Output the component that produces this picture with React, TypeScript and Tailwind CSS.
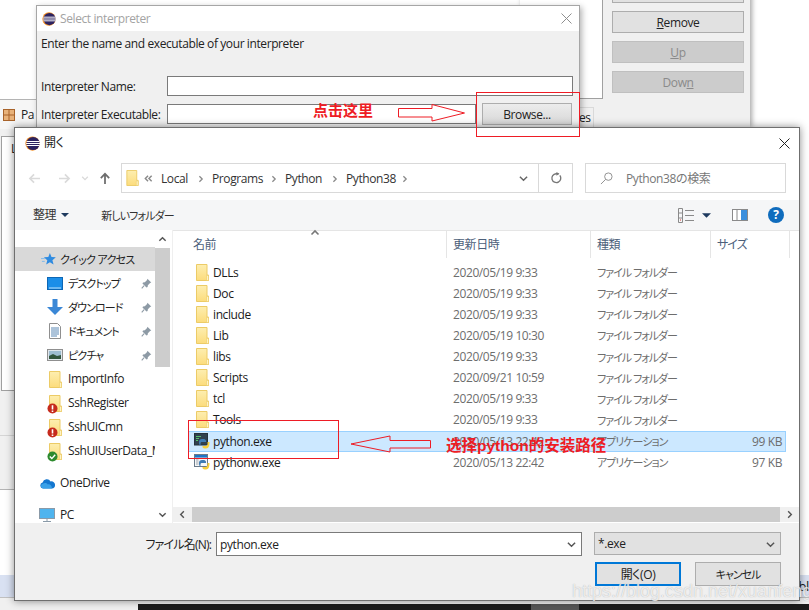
import React from "react";

const Eclipse = ({ className = "" }: { className?: string }) => (
  <svg viewBox="0 0 16 16" className={className}>
    <circle cx="8" cy="8" r="7.6" fill="#f28c1e" />
    <circle cx="8.6" cy="8" r="7" fill="#2c2360" />
    <path d="M1.6 5.9h14M1.2 8h14.8M1.6 10.1h14" stroke="#fff" strokeWidth="1.1" />
  </svg>
);

const Folder = ({ className = "" }: { className?: string }) => (
  <svg viewBox="0 0 13 17" className={className}>
    <defs>
      <linearGradient id="fg" x1="0" y1="0" x2="0" y2="1">
        <stop offset="0" stopColor="#fdeeb0" />
        <stop offset="1" stopColor="#fcdc7c" />
      </linearGradient>
    </defs>
    <path d="M.5.5h10.5v10.5h1.5v5.5H.5z" fill="url(#fg)" stroke="#eccb66" />
    <path d="M10.5 11.5h2v5h-2z" fill="#fff3c4" stroke="#eccb66" strokeWidth=".6" />
  </svg>
);

const PyBlobs = () => (
  <>
    <path d="M5 9c0-2 1-3 3-3h2c1 0 2 1 2 2v1H8c-1 0-1.5.5-1.5 1.5V12H6c-.7 0-1-1-1-3z" fill="#3e7cb4" />
    <path d="M15.5 9c0 3-.5 6.5-3.5 6.5-1.5 0-3.5-.5-3.5-1.5v-1h3c1 0 2-1 2-2V9z" fill="#f6cf3c" />
  </>
);

const PyExe = () => (
  <svg viewBox="0 0 16 16" className="w-[16px] h-[16px] shrink-0">
    <rect x=".5" y=".5" width="13" height="11.5" fill="#30414f" stroke="#24323d" />
    <path d="M2 3.5h5M2 5.5h3M2 7.5h2" stroke="#57c16a" strokeWidth="1" />
    <PyBlobs />
  </svg>
);

const PywExe = () => (
  <svg viewBox="0 0 16 16" className="w-[16px] h-[16px] shrink-0">
    <rect x=".5" y=".5" width="13" height="12" fill="#f7f7f7" stroke="#6a7a8a" />
    <rect x="1" y="1" width="12" height="2.6" fill="#1f74c6" />
    <path d="M2 6h2.5M2 8h2.5M2 10h2.5" stroke="#9aa3ac" />
    <PyBlobs />
  </svg>
);

const Pin = () => (
  <svg viewBox="0 0 12 12" className="w-[11px] h-[11px] shrink-0">
    <path d="M7 .8l4.2 4.2-1.3.5-2.4 2.4-.3 2-1.2.5L1.6 6l.6-1.2 2-.3 2.4-2.4z" fill="#8d9aa5" />
    <path d="M3.4 8.4L.8 11.2" stroke="#8d9aa5" strokeWidth="1.2" />
  </svg>
);

const Badge = ({ ok }: { ok?: boolean }) => (
  <svg viewBox="0 0 11 11" className="absolute left-[-2px] bottom-[-2px] w-[11px] h-[11px]">
    <circle cx="5.5" cy="5.5" r="5" fill={ok ? "#2d8a2d" : "#c62a1d"} />
    {ok ? (
      <path d="M2.8 5.6l2 2 3.4-3.8" stroke="#fff" strokeWidth="1.4" fill="none" />
    ) : (
      <path d="M5.5 2.2v4.2M5.5 7.4v1.5" stroke="#fff" strokeWidth="1.6" />
    )}
  </svg>
);

const Star = () => (
  <svg viewBox="0 0 16 16" className="w-[15px] h-[15px]">
    <path d="M9.5 1l1.7 4.4 4.6.3-3.6 3 1.2 4.7-3.9-2.6-4 2.6 1.2-4.7-3.6-3 4.7-.3z" fill="#2f8be0" />
    <path d="M0 7h4M1 10h3" stroke="#7db8ec" />
  </svg>
);

const Desktop = () => (
  <svg viewBox="0 0 16 13" className="w-[16px] h-[13px]">
    <rect x=".5" y=".5" width="15" height="12" fill="#1b8ee8" stroke="#0d67b5" />
    <path d="M2 11h12" stroke="#bfe2fb" />
  </svg>
);

const Down = () => (
  <svg viewBox="0 0 16 16" className="w-[16px] h-[16px]">
    <path d="M5.5 0h5v8H16l-8 8-8-8h5.5z" fill="#3a87d6" />
  </svg>
);

const Doc = () => (
  <svg viewBox="0 0 12 16" className="w-[12px] h-[16px]">
    <path d="M.5.5h8l3 3v12H.5z" fill="#fff" stroke="#8f8f8f" />
    <path d="M2 5h8M2 7h8M2 9h8M2 11h8M2 13h6" stroke="#5b88b5" />
  </svg>
);

const Pict = () => (
  <svg viewBox="0 0 16 12" className="w-[16px] h-[12px]">
    <rect x=".5" y=".5" width="15" height="11" fill="#dfe6ec" stroke="#8f8f8f" />
    <rect x="2" y="2" width="12" height="8" fill="#9dbcd0" />
    <path d="M2 7l4-2 4 2 4-1v4H2z" fill="#31543c" />
  </svg>
);

const Cloud = () => (
  <svg viewBox="0 0 16 11" className="w-[16px] h-[11px]">
    <path d="M4 10.5A3 3 0 013.6 4.6 4.4 4.4 0 0111.6 3.4 3.6 3.6 0 0116 7.2a3.2 3.2 0 01-3 3.3z" fill="#1476cf" />
    <path d="M4 10.5a2.4 2.4 0 01-.3-4.7c2-1.3 4-.6 5 .6 2-.6 4 .4 4.3 4.1z" fill="#39a0e8" />
  </svg>
);

const Monitor = () => (
  <svg viewBox="0 0 16 15" className="w-[16px] h-[15px]">
    <rect x=".5" y=".5" width="15" height="10" fill="#4fb4ee" stroke="#8a9aa8" />
    <path d="M8 11v2M4 13.5h8" stroke="#8a9aa8" />
  </svg>
);

const Chev = ({ d, className = "" }: { d: string; className?: string }) => (
  <svg viewBox="0 0 10 10" className={className}>
    <path d={d} fill="none" stroke="currentColor" strokeWidth="1.6" />
  </svg>
);

const Crumb = ({ label, w }: { label: string; w: string }) => (
  <div className={`flex items-center shrink-0 pt-[1px] ${w}`}>
    <span>{label}</span>
    <Chev d="M3 1.5L6.5 5 3 8.5" className="ml-auto mr-[7px] w-[8px] h-[8px] text-[#8a8a8a] shrink-0" />
  </div>
);

const sideQuick = [
  { label: "デスクトップ", icon: <Desktop /> },
  { label: "ダウンロード", icon: <Down /> },
  { label: "ドキュメント", icon: <Doc /> },
  { label: "ピクチャ", icon: <Pict /> },
];

const FolderBadge = ({ kind }: { kind?: "err" | "ok" }) => (
  <div className="relative w-[13px] h-[17px]">
    <Folder className="w-[13px] h-[17px]" />
    {kind && <Badge ok={kind === "ok"} />}
  </div>
);

const sideFolders: { label: string; kind?: "err" | "ok" }[] = [
  { label: "ImportInfo" },
  { label: "SshRegister", kind: "err" },
  { label: "SshUICmn", kind: "err" },
  { label: "SshUIUserData_M", kind: "ok" },
];

const folders = [
  ["DLLs", "2020/05/19 9:33"],
  ["Doc", "2020/05/19 9:33"],
  ["include", "2020/05/19 9:33"],
  ["Lib", "2020/05/19 10:30"],
  ["libs", "2020/05/19 9:33"],
  ["Scripts", "2020/09/21 10:59"],
  ["tcl", "2020/05/19 9:33"],
  ["Tools", "2020/05/19 9:33"],
];

const FileRow = ({
  icon,
  name,
  date,
  type,
  size,
  selected,
}: {
  icon: React.ReactNode;
  name: string;
  date: string;
  type: string;
  size?: string;
  selected?: boolean;
}) => (
  <div
    className={`flex items-center h-[21.125px] w-[598px] pl-[5px] border ${
      selected ? "bg-[#cce8ff] border-[#99d1ff]" : "border-transparent"
    }`}
  >
    <div className="w-[16px] flex justify-center shrink-0">{icon}</div>
    <div className="w-[243px] pl-[3px] pt-[1px] shrink-0 text-[#1a1a1a]">{name}</div>
    <div className="w-[144px] pt-[1px] shrink-0 text-[#6d6d6d]">{date}</div>
    <div className="flex-1 pt-[1px] text-[11px] tracking-[-1px] text-[#6d6d6d]">{type}</div>
    <div className="pr-[3px] pt-[1px] text-[#6d6d6d]">{size}</div>
  </div>
);

export default function App() {
  return (
    <div className="relative w-[809px] h-[610px] overflow-hidden bg-white text-[12px] leading-none text-[#222] font-['Open_Sans','Noto_Sans_CJK_JP',sans-serif] tracking-[-0.4px] [font-feature-settings:'palt']">
      {/* Window behind: left part */}
      <div className="absolute left-0 top-[99px] w-[750px] h-[391px] bg-[#f0f0f0] border-t border-b border-[#b4b4b4]">
        <div className="h-[29px] flex items-center pl-[3px] gap-[6px] bg-[#f6f6f6]">
          <svg viewBox="0 0 12 12" className="w-[12px] h-[12px]">
            <rect x=".5" y=".5" width="11" height="11" fill="#e8b27a" stroke="#a8632a" />
            <path d="M6 0v12M0 6h12" stroke="#a8632a" />
          </svg>
          <span>Pa</span>
        </div>
        <div className="ml-[1px] mt-[7px] w-[700px] h-[255px] bg-white border border-[#a0a0a0] pl-[9px] pt-[6px]">L</div>
        <div className="mt-[44px] h-[1px] bg-[#d5d5d5]" />
      </div>
      <div className="absolute left-0 top-[575px] w-[809px] h-[23px] bg-[#d9e1f2] flex justify-end items-center text-[13px]">
        bl
      </div>
      <div className="absolute left-0 top-[597px] w-[809px] h-[13px] bg-[#f0f0f0] border-t border-[#c0c0c0]" />
      <div className="absolute left-[138px] top-[604px] w-[671px] h-[6px] bg-[#1b1b1b] flex">
        <div className="ml-[393px] w-[48px] h-full bg-[#555]" />
      </div>

      {/* Window behind: right part */}
      <div className="absolute left-[520px] top-[-10px] w-[230px] h-[137px] bg-[#f0f0f0] shadow-[2px_0_5px_rgba(0,0,0,0.35)] flex">
        <div className="w-[83px] h-[109px] bg-white border-r border-b border-[#a0a0a0]" />
        <div className="ml-[9px] w-[132px] flex flex-col gap-[8px] text-center">
          <div className="h-[13px] bg-[#e1e1e1] border border-[#adadad]" />
          <div className="h-[22px] bg-[#e1e1e1] border border-[#adadad] flex items-center justify-center pt-[1px]">
            <span><span className="underline">R</span>emove</span>
          </div>
          <div className="h-[22px] bg-[#cccccc] border border-[#bfbfbf] text-[#8a8a8a] flex items-center justify-center pt-[1px]">
            <span><span className="underline">U</span>p</span>
          </div>
          <div className="h-[22px] bg-[#cccccc] border border-[#bfbfbf] text-[#8a8a8a] flex items-center justify-center pt-[1px]">
            <span>Dow<span className="underline">n</span></span>
          </div>
        </div>
      </div>
      <div className="absolute left-[579px] top-[107px] w-[15px] h-[20px] bg-[#f0f0f0] border-t border-r border-[#d9d9d9] flex items-center">
        es
      </div>

      {/* Select interpreter */}
      <div className="absolute left-[36px] top-[5px] w-[544px] h-[126px] bg-[#f0f0f0] border border-[#a6a6a6] shadow-[2px_2px_6px_rgba(0,0,0,0.3)]">
        <div className="h-[25px] bg-white flex items-center pl-[5px] pr-[7px]">
          <Eclipse className="w-[14px] h-[14px]" />
          <span className="ml-[4px] text-[#a3a3a3]">Select interpreter</span>
          <svg viewBox="0 0 11 11" className="ml-auto w-[11px] h-[11px]">
            <path d="M.5.5l10 10M10.5.5l-10 10" stroke="#8e8e8e" />
          </svg>
        </div>
        <div className="pl-[4px] pt-[7px] h-[45px]">Enter the name and executable of your interpreter</div>
        <div className="flex items-center h-[20px]">
          <div className="w-[130px] pl-[4px] pt-[2px]">Interpreter Name:</div>
          <div className="w-[406px] h-[20px] bg-white border border-[#7a7a7a]" />
        </div>
        <div className="flex items-center h-[20px] mt-[8px]">
          <div className="w-[130px] pl-[4px] pt-[2px]">Interpreter Executable:</div>
          <div className="w-[309px] h-[20px] bg-white border border-[#7a7a7a]" />
          <div className="ml-[6px] w-[90px] h-[22px] bg-gradient-to-b from-[#ececec] to-[#d8d8d8] border border-[#adadad] flex items-center justify-center pt-[1px]">
            Browse...
          </div>
        </div>
      </div>

      {/* Open dialog */}
      <div className="absolute left-[14px] top-[127px] w-[786px] h-[474px] bg-white border border-[#6f6f6f] shadow-[0_0_8px_rgba(0,0,0,0.45)] flex flex-col">
        <div className="h-[30px] flex items-center pl-[10px] pr-[9px] shrink-0">
          <Eclipse className="w-[15px] h-[15px]" />
          <span className="ml-[4px] text-[#222]">開く</span>
          <svg viewBox="0 0 11 11" className="ml-auto w-[11px] h-[11px]">
            <path d="M.5.5l10 10M10.5.5l-10 10" stroke="#222" />
          </svg>
        </div>
        <div className="h-[42px] flex items-start pt-[5px] shrink-0">
          <div className="flex items-center h-[30px] pl-[13px] w-[106px] shrink-0">
            <svg viewBox="0 0 14 12" className="w-[13px] h-[11px] text-[#dadada]">
              <path d="M13 6H2M6.5 1.5L2 6l4.5 4.5" fill="none" stroke="currentColor" strokeWidth="1.8" />
            </svg>
            <svg viewBox="0 0 14 12" className="ml-[17px] w-[13px] h-[11px] text-[#dadada]">
              <path d="M1 6h11M7.5 1.5L12 6l-4.5 4.5" fill="none" stroke="currentColor" strokeWidth="1.8" />
            </svg>
            <Chev d="M1.5 3.5L5 7l3.5-3.5" className="ml-[10px] w-[8px] h-[8px] text-[#dadada]" />
            <svg viewBox="0 0 12 14" className="ml-[10px] w-[12px] h-[13px] text-[#6d6d6d]">
              <path d="M6 13V2M1.5 6.5L6 2l4.5 4.5" fill="none" stroke="currentColor" strokeWidth="1.9" />
            </svg>
          </div>
          <div className="w-[452px] h-[30px] border border-[#d9d9d9] flex items-center pl-[4px] text-[#333]">
            <Folder className="w-[13px] h-[16px] shrink-0" />
            <Chev d="M4.5 2L1.5 5l3 3M8.5 2l-3 3 3 3" className="ml-[5px] w-[9px] h-[9px] text-[#8a8a8a] shrink-0" />
            <div className="w-[8px] shrink-0" />
            <Crumb label="Local" w="w-[51px]" />
            <Crumb label="Programs" w="w-[73px]" />
            <Crumb label="Python" w="w-[61px]" />
            <Crumb label="Python38" w="w-[70px]" />
            <Chev d="M1 3l4 4 4-4" className="ml-auto mr-[10px] w-[9px] h-[9px] text-[#666]" />
            <div className="w-[34px] h-full border-l border-[#d9d9d9] flex items-center justify-center">
              <svg viewBox="0 0 14 14" className="w-[12px] h-[12px]">
                <path d="M11.5 4A5.2 5.2 0 1 1 7 2H10" fill="none" stroke="#777" strokeWidth="1.6" />
                <path d="M7.5 0l3.5 2-3.5 2.5z" fill="#777" />
              </svg>
            </div>
          </div>
          <div className="ml-[12px] w-[201px] h-[30px] border border-[#d9d9d9] flex items-center pl-[14px] text-[#777]">
            <svg viewBox="0 0 14 14" className="w-[13px] h-[13px] shrink-0">
              <circle cx="9" cy="5" r="4" fill="none" stroke="#8a8a8a" />
              <path d="M6 8l-5 5" stroke="#8a8a8a" />
            </svg>
            <span className="ml-[13px] pt-[1px]">Python38の検索</span>
          </div>
        </div>
        <div className="h-[30px] bg-[#f5f6f7] flex items-center pl-[18px] shrink-0 text-[#333]">
          <span>整理</span>
          <svg viewBox="0 0 8 4" className="ml-[5px] w-[8px] h-[4px]"><path d="M0 0h8L4 4z" fill="#1e3a5f" /></svg>
          <span className="ml-[32px] text-[11px] tracking-[-0.9px]">新しいフォルダー</span>
          <svg viewBox="0 0 16 15" className="ml-auto w-[16px] h-[15px]">
            <path d="M.5.5h4v14h-4zM.5 5h4M.5 10h4M7 2.5h9M7 7.5h9M7 12.5h9" fill="none" stroke="#8a8a8a" />
            <rect x="2" y="11.5" width="1" height="1" fill="#d33" />
          </svg>
          <svg viewBox="0 0 8 4" className="ml-[8px] w-[9px] h-[5px]"><path d="M0 0h8L4 4z" fill="#1e3a5f" /></svg>
          <svg viewBox="0 0 16 12" className="ml-[21px] w-[16px] h-[12px]">
            <rect x=".5" y=".5" width="15" height="11" fill="#fff" stroke="#8a8a8a" />
            <path d="M5 .5v11" stroke="#8a8a8a" />
            <rect x="9" y="1" width="6" height="10" fill="#3a8fdd" />
          </svg>
          <div className="ml-[20px] mr-[15px] w-[16px] h-[16px] rounded-full bg-[#0f6cbd] text-white font-bold flex items-center justify-center">
            ?
          </div>
        </div>

        <div className="flex-1 flex min-h-0">
          {/* Sidebar */}
          <div className="w-[155px] shrink-0 flex">
            <div className="w-[140px] pt-[17px] overflow-hidden whitespace-nowrap">
              <div className="h-[24px] bg-[#d9d9d9] flex items-center pl-[26px]">
                <Star />
                <span className="ml-[4px] text-[11px] tracking-[-0.7px]">クイック アクセス</span>
              </div>
              {sideQuick.map((s) => (
                <div key={s.label} className="h-[24px] flex items-center pl-[32px] pr-[3px]">
                  <div className="w-[16px] flex justify-center shrink-0">{s.icon}</div>
                  <span className="ml-[5px] text-[11px] tracking-[-0.9px]">{s.label}</span>
                  <div className="ml-auto"><Pin /></div>
                </div>
              ))}
              {sideFolders.map((s) => (
                <div key={s.label} className="h-[24px] flex items-center pl-[34px]">
                  <div className="w-[13px] shrink-0"><FolderBadge kind={s.kind} /></div>
                  <span className="ml-[6px]">{s.label}</span>
                </div>
              ))}
              <div className="mt-[8px] h-[24px] flex items-center pl-[24px]">
                <Cloud />
                <span className="ml-[5px]">OneDrive</span>
              </div>
              <div className="mt-[8px] h-[24px] flex items-center pl-[24px]">
                <Monitor />
                <span className="ml-[5px]">PC</span>
              </div>
            </div>
            <div className="w-[15px] flex flex-col items-center">
              <div className="h-[18px] flex items-center justify-center">
                <Chev d="M1.5 6.5L5 3l3.5 3.5" className="w-[9px] h-[9px] text-[#555]" />
              </div>
              <div className="w-full h-[119px] bg-[#cdcdcd]" />
              <div className="mt-auto h-[17px] flex items-center justify-center">
                <Chev d="M1.5 3.5L5 7l3.5-3.5" className="w-[9px] h-[9px] text-[#555]" />
              </div>
            </div>
          </div>
          <div className="w-[3px] border-r border-[#efefef] shrink-0" />

          {/* List */}
          <div className="flex-1 flex flex-col min-w-0 border-t border-[#e5e5e5] relative">
            <Chev d="M1.5 6.5L5 3l3.5 3.5" className="absolute left-[137px] top-[-3px] w-[10px] h-[10px] text-[#777]" />
            <div className="h-[27px] flex text-[#4c607a] shrink-0">
              <div className="w-[274px] pl-[20px] flex items-center border-r border-[#e5e5e5]">名前</div>
              <div className="w-[144px] pl-[6px] flex items-center border-r border-[#e5e5e5]">更新日時</div>
              <div className="w-[120px] pl-[6px] flex items-center border-r border-[#e5e5e5]">種類</div>
              <div className="w-[79px] pl-[6px] flex items-center border-r border-[#e5e5e5] tracking-[-1px]">サイズ</div>
            </div>
            <div className="flex-1 pt-[3.5px] pl-[15px] min-h-0">
              {folders.map(([n, d]) => (
                <FileRow
                  key={n}
                  icon={<Folder className="w-[13px] h-[17px]" />}
                  name={n}
                  date={d}
                  type="ファイル フォルダー"
                />
              ))}
              <FileRow icon={<PyExe />} name="python.exe" date="2020/05/13 22:42" type="アプリケーション" size="99 KB" selected />
              <FileRow icon={<PywExe />} name="pythonw.exe" date="2020/05/13 22:42" type="アプリケーション" size="97 KB" />
            </div>
            <div className="h-[15px] mb-[1px] bg-[#f0f0f0] flex items-center shrink-0">
              <div className="w-[19px] flex justify-center">
                <Chev d="M6.5 1.5L3 5l3.5 3.5" className="w-[9px] h-[9px] text-[#555]" />
              </div>
              <div className="w-[588px] h-full bg-[#cdcdcd]" />
              <div className="flex-1 flex justify-center">
                <Chev d="M3.5 1.5L7 5 3.5 8.5" className="w-[9px] h-[9px] text-[#555]" />
              </div>
            </div>
          </div>
        </div>

        {/* Footer */}
        <div className="h-[77px] bg-[#f0f0f0] pt-[9px] shrink-0">
          <div className="flex items-start h-[24px]">
            <div className="w-[196px] h-[24px] flex items-center justify-end pt-[1px] tracking-[-0.8px]">ファイル名(N):</div>
            <div className="ml-[5px] w-[366px] h-[24px] bg-white border border-[#7a7a7a] flex items-center pl-[3px] pr-[5px] pt-[1px]">
              python.exe
              <Chev d="M1 3l4 4 4-4" className="ml-auto w-[9px] h-[9px] text-[#555]" />
            </div>
            <div className="ml-[12px] w-[187px] h-[23px] bg-[#e1e1e1] border border-[#adadad] flex items-center pl-[3px] pr-[5px] pt-[1px]">
              *.exe
              <Chev d="M1 3l4 4 4-4" className="ml-auto w-[9px] h-[9px] text-[#555]" />
            </div>
          </div>
          <div className="mt-[6px] flex justify-end pr-[18px] gap-[14px]">
            <div className="w-[86px] h-[24px] bg-[#e1e1e1] border-2 border-[#0078d7] flex items-center justify-center pt-[1px]">開く(O)</div>
            <div className="w-[86px] h-[24px] bg-[#e1e1e1] border border-[#adadad] flex items-center justify-center pt-[1px] text-[11px] tracking-[-1px]">キャンセル</div>
          </div>
        </div>
      </div>

      {/* Annotations */}
      <div className="absolute left-[476px] top-[92px] w-[104px] h-[45px] border border-[#ee1c25]" />
      <div className="absolute left-[188px] top-[420px] w-[151px] h-[39px] border border-[#ee1c25]" />
      <svg viewBox="0 0 70 20" className="absolute left-[397px] top-[103px] w-[70px] h-[20px]">
        <path d="M1.5 5.5h33.5V1.5L67.5 10 35 18v-4H1.5z" fill="none" stroke="#ee1c25" />
      </svg>
      <svg viewBox="0 0 82 20" className="absolute left-[350px] top-[434px] w-[82px] h-[20px]">
        <path d="M80.5 6.5H40V2L1 10l39 8v-4h40.5z" fill="none" stroke="#ee1c25" />
      </svg>
      <div className="absolute left-[313px] top-[102px] text-[15px] leading-[16px] font-bold text-[#ee1c25] tracking-normal font-['Noto_Sans_CJK_SC',sans-serif] [font-feature-settings:normal]">
        点击这里
      </div>
      <div className="absolute left-[446px] top-[437px] text-[15.5px] leading-[18px] font-bold text-[#ee1c25] tracking-normal font-['Liberation_Sans','Noto_Sans_CJK_SC',sans-serif] [font-feature-settings:normal]">
        选择python的安装路径
      </div>
      <div className="absolute left-[572px] top-[581px] text-[18px] leading-[20px] tracking-normal text-white/75 font-['Liberation_Sans',sans-serif] [text-shadow:0_0_1px_rgba(120,120,120,0.6)]">
        https://blog.csdn.net/xuanfengd
      </div>
    </div>
  );
}
